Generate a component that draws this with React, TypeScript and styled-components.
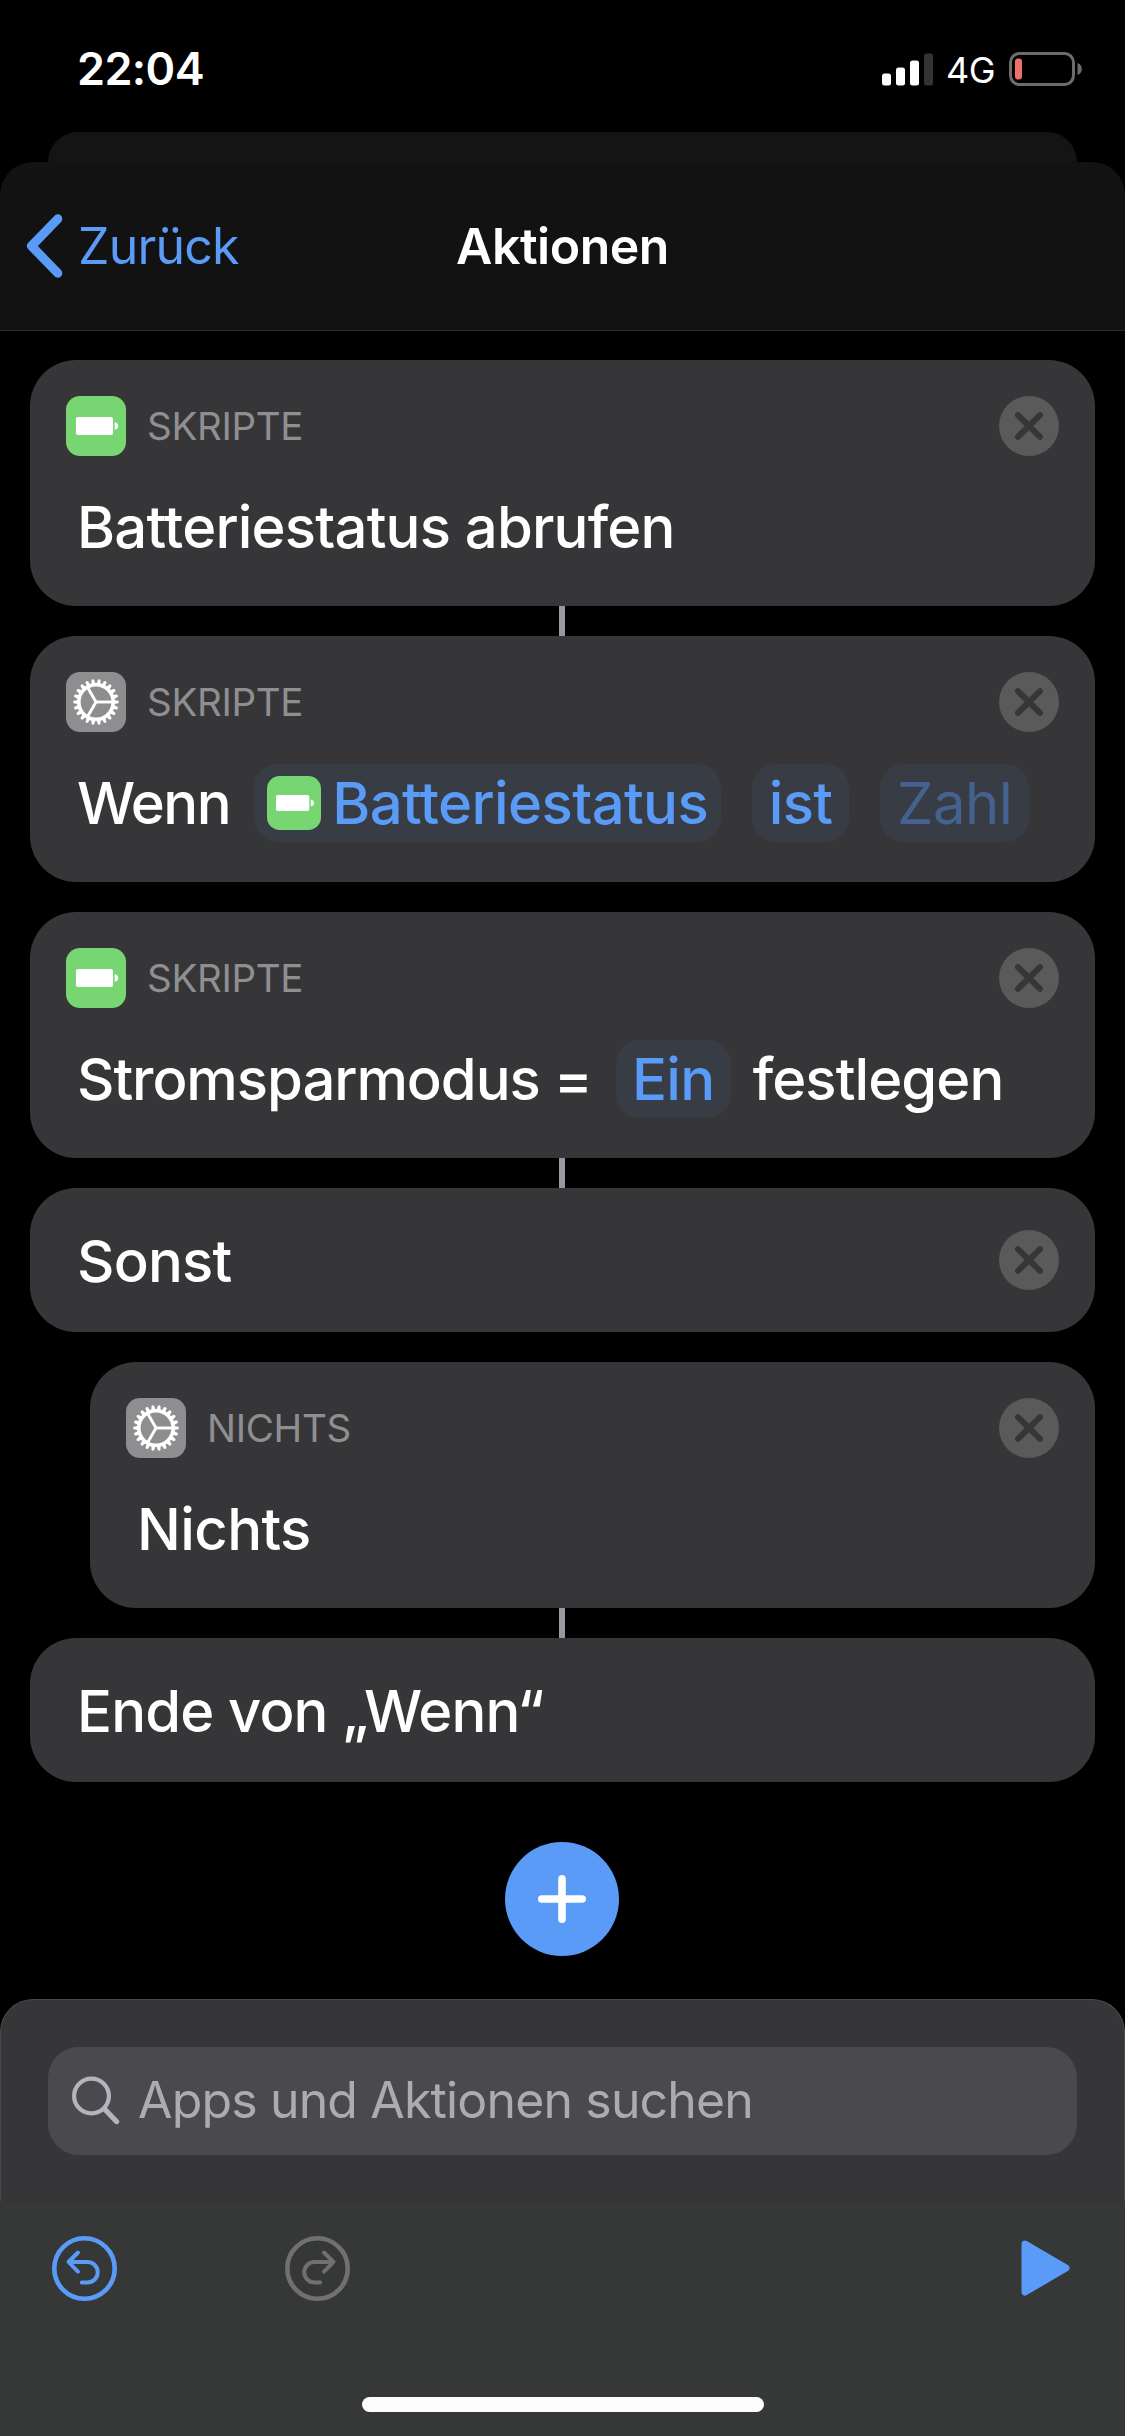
import React from "react";
import styled, { createGlobalStyle } from "styled-components";

const BLUE = "#5a9bf8";
const CARD = "#363638";

const GlobalStyle = createGlobalStyle`
  * { box-sizing: border-box; }
  html, body { margin: 0; padding: 0; background: #000; }
  body { font-family: Inter, "Liberation Sans", sans-serif; color: #fff; }
  svg { display: block; flex: none; }
`;

const Screen = styled.div`
  width: 1125px;
  height: 2436px;
  display: flex;
  flex-direction: column;
  background: #000;
  overflow: hidden;
`;

const StatusBar = styled.header`
  height: 132px;
  flex: none;
  display: flex;
  align-items: center;
  justify-content: space-between;
  padding: 6px 43px 0 77px;
`;

const Time = styled.span`
  font-size: 45px;
  font-weight: 600;
  line-height: 60px;
  letter-spacing: -0.6px;
`;

const StatusIcons = styled.div`
  display: flex;
  align-items: center;
`;

const Network = styled.span`
  width: 50px;
  margin: 2px 13px 0 13px;
  font-size: 36px;
  line-height: 44px;
  white-space: nowrap;
  letter-spacing: -0.6px;
`;

const BackSheet = styled.div`
  height: 30px;
  flex: none;
  margin: 0 48px;
  border-radius: 30px 30px 0 0;
  background: #141414;
`;

const NavBar = styled.nav`
  height: 169px;
  flex: none;
  display: grid;
  grid-template-columns: 1fr auto 1fr;
  align-items: center;
  padding: 0 26px;
  border-radius: 33px 33px 0 0;
  border-bottom: 1px solid #2b2b2b;
  background: #121212;
`;

const BackButton = styled.div`
  display: flex;
  align-items: center;
  gap: 15px;
  color: ${BLUE};
  font-size: 50px;
  line-height: 60px;
  letter-spacing: -0.8px;
`;

const NavTitle = styled.h1`
  margin: 0;
  font-size: 50px;
  font-weight: 600;
  line-height: 60px;
  letter-spacing: -0.5px;
`;

const Flow = styled.main`
  height: 1668px;
  flex: none;
  display: flex;
  flex-direction: column;
  padding: 29px 30px 0;
`;

const Card = styled.section<{ $indent?: boolean }>`
  height: 246px;
  flex: none;
  display: flex;
  flex-direction: column;
  gap: 32px;
  padding: 36px 36px 0;
  margin-left: ${(p) => (p.$indent ? 60 : 0)}px;
  border-radius: 46px;
  background: ${CARD};
`;

const SlimCard = styled.section`
  height: 144px;
  flex: none;
  display: flex;
  align-items: center;
  justify-content: space-between;
  padding: 0 36px;
  border-radius: 46px;
  background: ${CARD};
`;

const CardHeader = styled.div`
  height: 60px;
  display: flex;
  align-items: center;
`;

const Category = styled.span`
  flex: 1;
  margin-left: 21px;
  color: #8f8f91;
  font-size: 38.5px;
  line-height: 48px;
  letter-spacing: -0.3px;
`;

const Sentence = styled.div<{ $drop?: number }>`
  height: 78px;
  display: flex;
  align-items: center;
  margin-left: 11px;
  padding-top: ${(p) => p.$drop ?? 0}px;
`;

const Phrase = styled.span<{ $track?: number; $left?: number }>`
  margin-left: ${(p) => p.$left ?? 0}px;
  font-size: 58px;
  font-weight: 500;
  line-height: 72px;
  white-space: nowrap;
  letter-spacing: ${(p) => p.$track ?? -0.8}px;
`;

const Chip = styled.span<{ $width: number; $left: number; $empty?: boolean }>`
  width: ${(p) => p.$width}px;
  height: 78px;
  flex: none;
  display: flex;
  align-items: center;
  justify-content: center;
  gap: 11px;
  margin-left: ${(p) => p.$left}px;
  border-radius: 24px;
  background: #383d45;
  color: ${(p) => (p.$empty ? "#446190" : BLUE)};
  font-size: 58px;
  font-weight: ${(p) => (p.$empty ? 400 : 500)};
  line-height: 72px;
  white-space: nowrap;
  letter-spacing: -0.6px;
`;

const Gap = styled.div<{ $linked?: boolean }>`
  width: 6px;
  height: 30px;
  flex: none;
  margin-left: 529px;
  background: ${(p) => (p.$linked ? "#9697a0" : "transparent")};
`;

const AddButton = styled.div`
  width: 114px;
  height: 114px;
  flex: none;
  display: flex;
  align-items: center;
  justify-content: center;
  margin: 60px 0 0 475px;
  border-radius: 50%;
  background: ${BLUE};
`;

const SearchPanel = styled.section`
  height: 202px;
  flex: none;
  padding: 47px 47px 0;
  border: 1px solid #4b4b4d;
  border-bottom: none;
  border-radius: 33px 33px 0 0;
  background: ${CARD};
`;

const SearchField = styled.div`
  height: 108px;
  display: flex;
  align-items: center;
  gap: 18px;
  padding: 0 24px 2px;
  border-radius: 31px;
  background: #4a494e;
  color: #acacae;
  font-size: 50px;
  line-height: 60px;
  letter-spacing: -0.85px;
  white-space: nowrap;
`;

const Toolbar = styled.footer`
  height: 235px;
  flex: none;
  display: flex;
  flex-direction: column;
  align-items: center;
  border-top: 1px solid #323234;
  background: #363837;
`;

const Tools = styled.div`
  width: 100%;
  height: 133px;
  display: flex;
  align-items: center;
  gap: 168px;
  padding: 0 55px 0 52px;
`;

const PlaySlot = styled.div`
  margin: -2px 0 0 auto;
`;

const HomeIndicator = styled.div`
  width: 402px;
  height: 15px;
  margin-top: 62px;
  border-radius: 8px;
  background: #fdfdfd;
`;

const BatteryTile = ({ size = 60 }: { size?: number }) => (
  <svg width={size} height={size} viewBox="0 0 60 60">
    <rect width="60" height="60" rx="14" fill="#77d572" />
    <rect x="10" y="21" width="37" height="18" rx="2" fill="#fff" />
    <path d="M48.7 26c2.4.6 3.5 2.2 3.5 4s-1.1 3.4-3.5 4z" fill="#fff" />
  </svg>
);

const TEETH = Array.from({ length: 22 }, (_, i) => (i * 360) / 22);

const GearTile = () => (
  <svg width="60" height="60" viewBox="0 0 60 60">
    <rect width="60" height="60" rx="14" fill="#8e8e90" />
    <g transform="translate(30 30)">
      {TEETH.map((a) => (
        <path key={a} d="M17 -2.3L22.3 -1.3Q23.5 0 22.3 1.3L17 2.3z" fill="#fff" transform={`rotate(${a})`} />
      ))}
      <circle r="17.2" fill="none" stroke="#fff" strokeWidth="3.6" />
      {[0, 120, 240].map((a) => (
        <path key={a} d="M0 0H17" stroke="#fff" strokeWidth="2.9" transform={`rotate(${a})`} />
      ))}
    </g>
  </svg>
);

const CloseIcon = () => (
  <svg width="60" height="60" viewBox="0 0 60 60">
    <circle cx="30" cy="30" r="30" fill="#5a5a5a" />
    <path d="M19 19.2L41 40.8M41 19.2L19 40.8" stroke={CARD} strokeWidth="6" strokeLinecap="round" />
  </svg>
);

const UndoIcon = ({ color, flip }: { color: string; flip?: boolean }) => (
  <svg width="65" height="65" viewBox="0 0 65 65">
    <g
      fill="none"
      stroke={color}
      strokeLinecap="round"
      strokeLinejoin="round"
      transform={flip ? "translate(65 0) scale(-1 1)" : undefined}
    >
      <circle cx="32.5" cy="32.5" r="30.2" strokeWidth="4.6" />
      <path d="M26 16.5L16.5 26L26 35.7M17 26H35.5A10.2 10.2 0 0 1 35.5 46.5H29.8" strokeWidth="3.9" />
    </g>
  </svg>
);

const Header = ({ icon, label }: { icon: React.ReactNode; label: string }) => (
  <CardHeader>
    {icon}
    <Category>{label}</Category>
    <CloseIcon />
  </CardHeader>
);

export default function App() {
  return (
    <Screen>
      <GlobalStyle />
      <StatusBar>
        <Time>22:04</Time>
        <StatusIcons>
          <svg width="51" height="33" viewBox="0 0 51 33">
            <rect y="20.5" width="9" height="12" rx="2.5" fill="#fff" />
            <rect x="14" y="14.5" width="9" height="18" rx="2.5" fill="#fff" />
            <rect x="28" y="7.5" width="9" height="25" rx="2.5" fill="#fff" />
            <rect x="42" y="0.5" width="9" height="32" rx="2.5" fill="#333" />
          </svg>
          <Network>4G</Network>
          <svg width="73" height="34" viewBox="0 0 73 34">
            <rect x="1.5" y="1.5" width="63" height="31" rx="9" fill="none" stroke="#6c6c6c" strokeWidth="3" />
            <rect x="6" y="6.5" width="7" height="21" rx="3" fill="#ee7067" />
            <path d="M68.5 11c2.8 1 4.3 3.3 4.3 6s-1.5 5-4.3 6z" fill="#6c6c6c" />
          </svg>
        </StatusIcons>
      </StatusBar>
      <BackSheet />
      <NavBar>
        <BackButton>
          <svg width="37" height="64" viewBox="0 0 37 64">
            <path
              d="M31.8 4.8L5.5 32L31.8 59.2"
              fill="none"
              stroke={BLUE}
              strokeWidth="9"
              strokeLinecap="round"
              strokeLinejoin="round"
            />
          </svg>
          Zurück
        </BackButton>
        <NavTitle>Aktionen</NavTitle>
      </NavBar>
      <Flow>
        <Card>
          <Header icon={<BatteryTile />} label="SKRIPTE" />
          <Sentence>
            <Phrase>Batteriestatus abrufen</Phrase>
          </Sentence>
        </Card>
        <Gap $linked />
        <Card>
          <Header icon={<GearTile />} label="SKRIPTE" />
          <Sentence>
            <Phrase $track={-1.5}>Wenn</Phrase>
            <Chip $width={467} $left={24}>
              <BatteryTile size={54} />
              Batteriestatus
            </Chip>
            <Chip $width={97} $left={31}>ist</Chip>
            <Chip $width={149} $left={31} $empty>Zahl</Chip>
          </Sentence>
        </Card>
        <Gap />
        <Card>
          <Header icon={<BatteryTile />} label="SKRIPTE" />
          <Sentence>
            <Phrase $track={-1.05}>Stromsparmodus =</Phrase>
            <Chip $width={115} $left={24}>Ein</Chip>
            <Phrase $track={-0.95} $left={22}>festlegen</Phrase>
          </Sentence>
        </Card>
        <Gap $linked />
        <SlimCard>
          <Sentence $drop={2}>
            <Phrase>Sonst</Phrase>
          </Sentence>
          <CloseIcon />
        </SlimCard>
        <Gap />
        <Card $indent>
          <Header icon={<GearTile />} label="NICHTS" />
          <Sentence>
            <Phrase $track={-0.6}>Nichts</Phrase>
          </Sentence>
        </Card>
        <Gap $linked />
        <SlimCard>
          <Sentence $drop={2}>
            <Phrase $track={-0.85}>Ende von „Wenn“</Phrase>
          </Sentence>
        </SlimCard>
        <AddButton>
          <svg width="48" height="48" viewBox="0 0 48 48">
            <path d="M24 3.8V44.2M3.8 24H44.2" stroke="#fff" strokeWidth="7.6" strokeLinecap="round" />
          </svg>
        </AddButton>
      </Flow>
      <SearchPanel>
        <SearchField>
          <svg width="48" height="49" viewBox="0 0 48 49">
            <circle cx="19.5" cy="20" r="17.4" fill="none" stroke="#b4b4bc" strokeWidth="4.2" />
            <path d="M32.5 33L44.5 45.5" stroke="#b4b4bc" strokeWidth="5.4" strokeLinecap="round" />
          </svg>
          Apps und Aktionen suchen
        </SearchField>
      </SearchPanel>
      <Toolbar>
        <Tools>
          <UndoIcon color={BLUE} />
          <UndoIcon color="#707070" flip />
          <PlaySlot>
            <svg width="49" height="56" viewBox="0 0 49 56">
              <path
                d="M4 4L45 28L4 52z"
                fill={BLUE}
                stroke={BLUE}
                strokeWidth="7"
                strokeLinejoin="round"
              />
            </svg>
          </PlaySlot>
        </Tools>
        <HomeIndicator />
      </Toolbar>
    </Screen>
  );
}
